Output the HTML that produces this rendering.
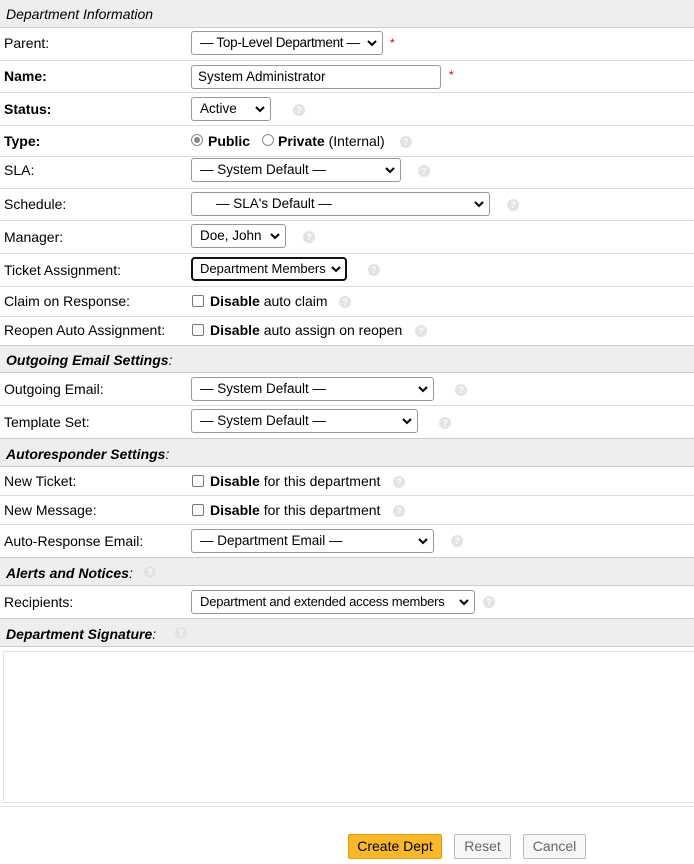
<!DOCTYPE html><html><head><meta charset="utf-8"><style>
body{margin:0;width:694px;height:864px;position:relative;font-family:"Liberation Sans",Arial,sans-serif;font-size:14px;color:#000;background:#fff;overflow:hidden}
.a{position:absolute}
.line{position:absolute;left:0;width:694px;height:1px;background:#ddd}
.sec{position:absolute;left:0;width:694px;background:#eee;border-top:1px solid #ccc;border-bottom:1px solid #ccc;box-sizing:border-box}
.sec span{position:absolute;left:6px;font-style:italic;font-weight:bold;font-size:14px}
.lbl{position:absolute;left:4px;line-height:16px}
.sel{position:absolute;left:191px;height:24px;border:1px solid #999;border-radius:3px;box-sizing:border-box;line-height:22px;padding-left:8px;background:#fff;white-space:nowrap;font-size:13.5px;overflow:hidden}
.sel svg{position:absolute;right:5px;top:8px;background:#fff}
.h{position:absolute;width:12px;height:12px;border-radius:50%;background:#e3e3e3;color:#fff;font-size:9px;font-weight:bold;text-align:center;line-height:12px}
.cb{position:absolute;left:192px;width:12px;height:12px;border:1px solid #777;border-radius:2px;box-sizing:border-box;background:#fff}
.t{position:absolute;line-height:16px;white-space:nowrap}
.req{position:absolute;color:#d00;font-size:12px}
.btn{position:absolute;top:834px;height:25px;box-sizing:border-box;border:1px solid #bbb;border-radius:2px;background:#f7f7f7;color:#666;text-align:center;line-height:23px;font-size:14px}
</style></head><body>
<div class="sec" style="top:0;height:28px;font-weight:normal;border-top:none"><span style="top:6px;font-weight:normal">Department Information</span></div>

<div class="lbl" style="top:35px">Parent:</div>
<div class="sel" style="top:31px;width:192px;letter-spacing:-0.3px">— Top-Level Department —<svg width="10" height="7"><path d="M1 1l4 4 4-4" stroke="#000" stroke-width="2" fill="none"/></svg></div>
<div class="req" style="left:390px;top:36px">*</div>
<div class="line" style="top:60px"></div>

<div class="lbl" style="top:68px;font-weight:bold">Name:</div>
<div class="sel" style="top:65px;width:250px;padding-left:6px">System Administrator</div>
<div class="req" style="left:449px;top:68px">*</div>
<div class="line" style="top:92px"></div>

<div class="lbl" style="top:101px;font-weight:bold">Status:</div>
<div class="sel" style="top:97px;width:80px">Active<svg width="10" height="7"><path d="M1 1l4 4 4-4" stroke="#000" stroke-width="2" fill="none"/></svg></div>
<div class="h" style="left:293px;top:104px">?</div>
<div class="line" style="top:125px"></div>

<div class="lbl" style="top:133px;font-weight:bold">Type:</div>
<div class="a" style="left:191px;top:134px;width:12px;height:12px;border-radius:50%;border:1px solid #888;box-sizing:border-box;background:#fff"><div style="position:absolute;left:2px;top:2px;width:6px;height:6px;border-radius:50%;background:#888"></div></div>
<div class="t" style="left:208px;top:133px"><b>Public</b></div>
<div class="a" style="left:262px;top:134px;width:12px;height:12px;border-radius:50%;border:1px solid #888;box-sizing:border-box;background:#fff"></div>
<div class="t" style="left:278px;top:133px"><b>Private</b> (Internal)</div>
<div class="h" style="left:400px;top:136px">?</div>
<div class="line" style="top:156px"></div>

<div class="lbl" style="top:162px">SLA:</div>
<div class="sel" style="top:158px;width:210px">— System Default —<svg width="10" height="7"><path d="M1 1l4 4 4-4" stroke="#000" stroke-width="2" fill="none"/></svg></div>
<div class="h" style="left:418px;top:165px">?</div>
<div class="line" style="top:188px"></div>

<div class="lbl" style="top:196px">Schedule:</div>
<div class="sel" style="top:192px;width:299px;padding-left:24px">— SLA's Default —<svg width="10" height="7"><path d="M1 1l4 4 4-4" stroke="#000" stroke-width="2" fill="none"/></svg></div>
<div class="h" style="left:507px;top:199px">?</div>
<div class="line" style="top:220px"></div>

<div class="lbl" style="top:229px">Manager:</div>
<div class="sel" style="top:224px;width:95px">Doe, John<svg width="10" height="7"><path d="M1 1l4 4 4-4" stroke="#000" stroke-width="2" fill="none"/></svg></div>
<div class="h" style="left:303px;top:231px">?</div>
<div class="line" style="top:253px"></div>

<div class="lbl" style="top:262px">Ticket Assignment:</div>
<div class="sel" style="top:257px;width:156px;border:2px solid #111;border-radius:4px;line-height:20px;padding-left:7px;font-size:13px">Department Members<svg width="10" height="7" style="top:7px;right:4px"><path d="M1 1l4 4 4-4" stroke="#000" stroke-width="2" fill="none"/></svg></div>
<div class="h" style="left:368px;top:264px">?</div>
<div class="line" style="top:286px"></div>

<div class="lbl" style="top:293px">Claim on Response:</div>
<div class="cb" style="top:295px"></div>
<div class="t" style="left:210px;top:293px"><b>Disable</b> auto claim</div>
<div class="h" style="left:339px;top:296px">?</div>
<div class="line" style="top:316px"></div>

<div class="lbl" style="top:322px">Reopen Auto Assignment:</div>
<div class="cb" style="top:324px"></div>
<div class="t" style="left:210px;top:322px"><b>Disable</b> auto assign on reopen</div>
<div class="h" style="left:415px;top:325px">?</div>

<div class="sec" style="top:345px;height:28px"><span style="top:6px">Outgoing Email Settings<span style="position:static;font-weight:normal">:</span></span></div>

<div class="lbl" style="top:381px">Outgoing Email:</div>
<div class="sel" style="top:377px;width:243px">— System Default —<svg width="10" height="7"><path d="M1 1l4 4 4-4" stroke="#000" stroke-width="2" fill="none"/></svg></div>
<div class="h" style="left:455px;top:384px">?</div>
<div class="line" style="top:405px"></div>

<div class="lbl" style="top:414px">Template Set:</div>
<div class="sel" style="top:409px;width:227px">— System Default —<svg width="10" height="7"><path d="M1 1l4 4 4-4" stroke="#000" stroke-width="2" fill="none"/></svg></div>
<div class="h" style="left:439px;top:417px">?</div>

<div class="sec" style="top:438px;height:29px"><span style="top:7px">Autoresponder Settings<span style="position:static;font-weight:normal">:</span></span></div>

<div class="lbl" style="top:473px">New Ticket:</div>
<div class="cb" style="top:475px"></div>
<div class="t" style="left:210px;top:473px"><b>Disable</b> for this department</div>
<div class="h" style="left:393px;top:476px">?</div>
<div class="line" style="top:495px"></div>

<div class="lbl" style="top:502px">New Message:</div>
<div class="cb" style="top:504px"></div>
<div class="t" style="left:210px;top:502px"><b>Disable</b> for this department</div>
<div class="h" style="left:393px;top:505px">?</div>
<div class="line" style="top:524px"></div>

<div class="lbl" style="top:533px">Auto-Response Email:</div>
<div class="sel" style="top:529px;width:243px">— Department Email —<svg width="10" height="7"><path d="M1 1l4 4 4-4" stroke="#000" stroke-width="2" fill="none"/></svg></div>
<div class="h" style="left:451px;top:535px">?</div>

<div class="sec" style="top:557px;height:29px"><span style="top:7px">Alerts and Notices<span style="position:static;font-weight:normal">:</span></span></div>
<div class="h" style="left:144px;top:566px">?</div>

<div class="lbl" style="top:594px">Recipients:</div>
<div class="sel" style="top:590px;width:284px;font-size:13px;letter-spacing:-0.2px">Department and extended access members<svg width="10" height="7"><path d="M1 1l4 4 4-4" stroke="#000" stroke-width="2" fill="none"/></svg></div>
<div class="h" style="left:483px;top:596px">?</div>

<div class="sec" style="top:618px;height:29px"><span style="top:7px">Department Signature<span style="position:static;font-weight:normal">:</span></span></div>
<div class="h" style="left:175px;top:627px">?</div>

<div class="a" style="left:3px;top:651px;width:700px;height:152px;border:1px solid #e3e3e3;box-sizing:border-box"></div>
<div class="line" style="top:806px;background:#e3e3e3"></div>

<div class="btn" style="left:348px;width:94px;background:#f8b82a;border-color:#e0a000;color:#000">Create Dept</div>
<div class="btn" style="left:454px;width:57px">Reset</div>
<div class="btn" style="left:523px;width:63px">Cancel</div>
</body></html>
